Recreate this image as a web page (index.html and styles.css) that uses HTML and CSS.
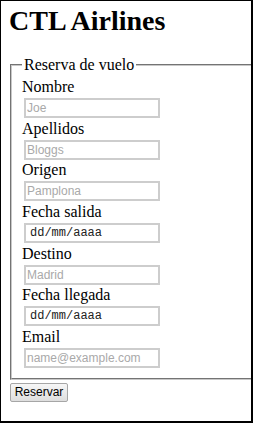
FILE: index.html
```html
<!DOCTYPE html>
<html>
<head>
    <title>CTL Airlines</title>
    <link rel="stylesheet" href="styles.css">
</head>
<body>
    <div class="frame">
        <div class="page">
            <h1>CTL Airlines</h1>
            <form>
                <fieldset>
                    <legend>Reserva de vuelo</legend>
                    <div class="field">
                        <label for="nombre">Nombre</label>
                        <input type="text" id="nombre" placeholder="Joe">
                    </div>
                    <div class="field">
                        <label for="apellidos">Apellidos</label>
                        <input type="text" id="apellidos" placeholder="Bloggs">
                    </div>
                    <div class="field">
                        <label for="origen">Origen</label>
                        <input type="text" id="origen" placeholder="Pamplona">
                    </div>
                    <div class="field">
                        <label for="salida">Fecha salida</label>
                        <input type="text" id="salida" class="date" value="dd/mm/aaaa">
                    </div>
                    <div class="field">
                        <label for="destino">Destino</label>
                        <input type="text" id="destino" placeholder="Madrid">
                    </div>
                    <div class="field">
                        <label for="llegada">Fecha llegada</label>
                        <input type="text" id="llegada" class="date" value="dd/mm/aaaa">
                    </div>
                    <div class="field">
                        <label for="email">Email</label>
                        <input type="text" id="email" placeholder="name@example.com">
                    </div>
                </fieldset>
                <button type="button" class="submit">Reservar</button>
            </form>
        </div>
    </div>
</body>
</html>
```

FILE: styles.css
```css
body {
    margin: 0;
    font-family: "Liberation Serif", "Times New Roman", serif;
    color: #000;
    background: #fff;
}

.frame {
    box-sizing: border-box;
    width: 253px;
    height: 423px;
    border: 1px solid #000;
    border-right-width: 2px;
    border-bottom-width: 2px;
    overflow: hidden;
}

.page {
    width: 300px;
    padding: 0 8px;
}

h1 {
    margin: 4px 0 19px;
    font-size: 28px;
    line-height: 32px;
    font-weight: bold;
}

fieldset {
    margin: 0 0 0 1px;
    padding: 4px 10px 8px;
    border: 2px groove #c8c8c8;
    min-width: 0;
}

legend {
    padding: 0 2px;
    font-size: 16px;
    line-height: 18px;
}

.field {
    margin-bottom: 1.67px;
}

.field label {
    display: block;
    font-size: 16px;
    line-height: 18px;
}

.field input {
    display: block;
    box-sizing: border-box;
    width: 136px;
    height: 20px;
    margin: 2px 0 0 2px;
    padding: 0 1px;
    border: 2px solid #cdcdcd;
    border-radius: 0;
    font-family: "Liberation Sans", Arial, sans-serif;
    font-size: 12px;
    color: #000;
    background: #fff;
    outline: none;
}

.field input::placeholder {
    color: #a9a9a9;
}

.field input.date {
    font-family: "Liberation Mono", "Courier New", monospace;
    font-size: 12px;
    padding-left: 4px;
    color: #222;
}

.submit {
    display: block;
    box-sizing: border-box;
    width: 58px;
    height: 19px;
    margin: 3px 0 0 1px;
    padding: 0;
    border: 1px solid #a6a6a6;
    border-radius: 2px;
    background: linear-gradient(#f6f6f6, #dedede);
    font-family: "Liberation Sans", Arial, sans-serif;
    font-size: 12px;
    color: #000;
}
```
